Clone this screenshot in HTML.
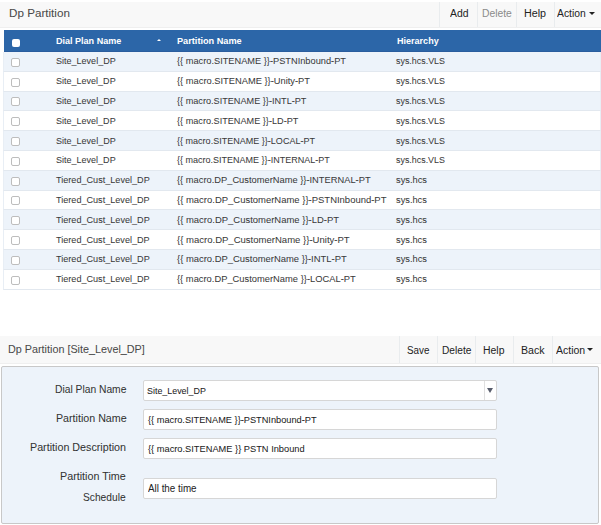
<!DOCTYPE html>
<html><head><meta charset="utf-8">
<style>
*{box-sizing:border-box;margin:0;padding:0}
html,body{width:601px;height:525px;overflow:hidden;background:#fff}
body{font-family:"Liberation Sans",sans-serif;position:relative;color:#333}
div{position:absolute;white-space:nowrap}
.t{line-height:normal;transform-origin:0 0;-webkit-text-stroke:0.04px currentColor}
.b{-webkit-text-stroke:0}
.bar{left:0;width:601px;background:#f8f8f8;border-bottom:1px solid #efefef}
.sep{width:1px;background:#e9ecee}
.thead{left:4px;top:30px;width:597px;height:21.5px;background:#2c66a8;border-bottom:1px solid #2a5d9e}
.row{left:3px;width:598px;height:19.8px;border-bottom:1px solid #e2e8ef;border-left:1px solid #e8eef5;border-right:1px solid #e8eef5}
.row.odd{background:#edf3fa}
.cb{left:11px;width:9px;height:9px;border:1px solid #bdbdbd;border-radius:2px;background:#fff}
.panel{left:1px;top:366px;width:598px;height:158px;background:#edf3fa;border:1px solid #c8c8c8;border-radius:2px}
.inp{left:143px;width:354px;height:20.5px;background:#fff;border:1px solid #d6d6d6;border-radius:2px}
.caret{width:0;height:0;border-left:3px solid transparent;border-right:3px solid transparent}

</style></head><body>
<div class="bar" style="top:2px;height:26px"></div>
<div class="sep" style="left:439px;top:2px;height:25px"></div>
<div class="sep" style="left:477px;top:2px;height:25px"></div>
<div class="sep" style="left:516px;top:2px;height:25px"></div>
<div class="sep" style="left:554px;top:2px;height:25px"></div>
<div class="caret" style="left:589px;top:12px;border-top:3px solid #222"></div>
<div class="thead"></div>
<div class="cb" style="left:12px;top:39px;width:8px;height:8px;border:none;background:#fff"></div>
<div class="caret" style="left:156.5px;top:38.8px;border-left-width:2.5px;border-right-width:2.5px;border-bottom:2.5px solid #fff"></div>
<div class="row odd" style="top:52.00px"></div><div class="cb" style="top:57.80px"></div>
<div class="row" style="top:71.80px"></div><div class="cb" style="top:77.60px"></div>
<div class="row odd" style="top:91.60px"></div><div class="cb" style="top:97.40px"></div>
<div class="row" style="top:111.40px"></div><div class="cb" style="top:117.20px"></div>
<div class="row odd" style="top:131.20px"></div><div class="cb" style="top:137.00px"></div>
<div class="row" style="top:151.00px"></div><div class="cb" style="top:156.80px"></div>
<div class="row odd" style="top:170.80px"></div><div class="cb" style="top:176.60px"></div>
<div class="row" style="top:190.60px"></div><div class="cb" style="top:196.40px"></div>
<div class="row odd" style="top:210.40px"></div><div class="cb" style="top:216.20px"></div>
<div class="row" style="top:230.20px"></div><div class="cb" style="top:236.00px"></div>
<div class="row odd" style="top:250.00px"></div><div class="cb" style="top:255.80px"></div>
<div class="row" style="top:269.80px"></div><div class="cb" style="top:275.60px"></div>
<div class="bar" style="top:336px;height:28px"></div>
<div class="sep" style="left:399px;top:336px;height:27px"></div>
<div class="sep" style="left:437px;top:336px;height:27px"></div>
<div class="sep" style="left:475px;top:336px;height:27px"></div>
<div class="sep" style="left:513px;top:336px;height:27px"></div>
<div class="sep" style="left:552px;top:336px;height:27px"></div>
<div class="caret" style="left:587px;top:348px;border-top:3px solid #222"></div>
<div class="panel"></div>
<div class="inp" style="top:380px"></div>
<div class="sep" style="left:484px;top:381px;height:18.5px;background:#e0e0e0"></div>
<div class="caret" style="left:487px;top:387.5px;border-left-width:3.5px;border-right-width:3.5px;border-top:5px solid #585d6c"></div>
<div class="inp" style="top:409px"></div>
<div class="inp" style="top:438px"></div>
<div class="inp" style="top:478px"></div>

<div class="t" style="left:9.48px;top:7.00px;font-size:10.5px;transform:scaleX(1.1103);color:#4a4a4a">Dp Partition</div>
<div class="t b" style="left:449.85px;top:8.00px;font-size:10px;transform:scaleX(1.0388);color:#222">Add</div>
<div class="t b" style="left:481.72px;top:8.00px;font-size:10px;transform:scaleX(1.0331);color:#8a8a8a">Delete</div>
<div class="t b" style="left:524.40px;top:8.00px;font-size:10px;transform:scaleX(1.0734);color:#222">Help</div>
<div class="t b" style="left:557.40px;top:8.00px;font-size:10px;transform:scaleX(1.0325);color:#222">Action</div>
<div class="t b" style="left:55.85px;top:35.20px;font-size:9.6px;transform:scaleX(0.9411);color:#fff;font-weight:bold">Dial Plan Name</div>
<div class="t b" style="left:177.13px;top:35.20px;font-size:9.6px;transform:scaleX(0.9556);color:#fff;font-weight:bold">Partition Name</div>
<div class="t b" style="left:396.69px;top:35.20px;font-size:9.6px;transform:scaleX(0.9419);color:#fff;font-weight:bold">Hierarchy</div>
<div class="t" style="left:55.63px;top:55.30px;font-size:9.6px;transform:scaleX(0.9407);color:#3a3a3a">Site_Level_DP</div>
<div class="t" style="left:176.73px;top:55.30px;font-size:9.6px;transform:scaleX(0.9630);color:#3a3a3a">{{ macro.SITENAME }}-PSTNInbound-PT</div>
<div class="t" style="left:396.39px;top:55.30px;font-size:9.6px;transform:scaleX(0.9272);color:#3a3a3a">sys.hcs.VLS</div>
<div class="t" style="left:55.64px;top:75.10px;font-size:9.6px;transform:scaleX(0.9398);color:#3a3a3a">Site_Level_DP</div>
<div class="t" style="left:176.78px;top:75.10px;font-size:9.6px;transform:scaleX(0.9707);color:#3a3a3a">{{ macro.SITENAME }}-Unity-PT</div>
<div class="t" style="left:396.39px;top:75.10px;font-size:9.6px;transform:scaleX(0.9269);color:#3a3a3a">sys.hcs.VLS</div>
<div class="t" style="left:55.63px;top:94.90px;font-size:9.6px;transform:scaleX(0.9407);color:#3a3a3a">Site_Level_DP</div>
<div class="t" style="left:176.74px;top:94.90px;font-size:9.6px;transform:scaleX(0.9521);color:#3a3a3a">{{ macro.SITENAME }}-INTL-PT</div>
<div class="t" style="left:396.39px;top:94.90px;font-size:9.6px;transform:scaleX(0.9272);color:#3a3a3a">sys.hcs.VLS</div>
<div class="t" style="left:55.64px;top:114.70px;font-size:9.6px;transform:scaleX(0.9398);color:#3a3a3a">Site_Level_DP</div>
<div class="t" style="left:176.76px;top:114.70px;font-size:9.6px;transform:scaleX(0.9524);color:#3a3a3a">{{ macro.SITENAME }}-LD-PT</div>
<div class="t" style="left:396.39px;top:114.70px;font-size:9.6px;transform:scaleX(0.9269);color:#3a3a3a">sys.hcs.VLS</div>
<div class="t" style="left:55.63px;top:134.50px;font-size:9.6px;transform:scaleX(0.9407);color:#3a3a3a">Site_Level_DP</div>
<div class="t" style="left:176.73px;top:134.50px;font-size:9.6px;transform:scaleX(0.9412);color:#3a3a3a">{{ macro.SITENAME }}-LOCAL-PT</div>
<div class="t" style="left:396.39px;top:134.50px;font-size:9.6px;transform:scaleX(0.9272);color:#3a3a3a">sys.hcs.VLS</div>
<div class="t" style="left:55.64px;top:154.30px;font-size:9.6px;transform:scaleX(0.9398);color:#3a3a3a">Site_Level_DP</div>
<div class="t" style="left:176.76px;top:154.30px;font-size:9.6px;transform:scaleX(0.9391);color:#3a3a3a">{{ macro.SITENAME }}-INTERNAL-PT</div>
<div class="t" style="left:396.39px;top:154.30px;font-size:9.6px;transform:scaleX(0.9269);color:#3a3a3a">sys.hcs.VLS</div>
<div class="t" style="left:55.90px;top:174.10px;font-size:9.6px;transform:scaleX(0.9487);color:#3a3a3a">Tiered_Cust_Level_DP</div>
<div class="t" style="left:176.75px;top:174.10px;font-size:9.6px;transform:scaleX(0.9708);color:#3a3a3a">{{ macro.DP_CustomerName }}-INTERNAL-PT</div>
<div class="t" style="left:396.34px;top:174.10px;font-size:9.6px;transform:scaleX(0.9658);color:#3a3a3a">sys.hcs</div>
<div class="t" style="left:55.93px;top:193.90px;font-size:9.6px;transform:scaleX(0.9479);color:#3a3a3a">Tiered_Cust_Level_DP</div>
<div class="t" style="left:176.77px;top:193.90px;font-size:9.6px;transform:scaleX(0.9869);color:#3a3a3a">{{ macro.DP_CustomerName }}-PSTNInbound-PT</div>
<div class="t" style="left:396.34px;top:193.90px;font-size:9.6px;transform:scaleX(0.9645);color:#3a3a3a">sys.hcs</div>
<div class="t" style="left:55.90px;top:213.70px;font-size:9.6px;transform:scaleX(0.9487);color:#3a3a3a">Tiered_Cust_Level_DP</div>
<div class="t" style="left:176.75px;top:213.70px;font-size:9.6px;transform:scaleX(0.9868);color:#3a3a3a">{{ macro.DP_CustomerName }}-LD-PT</div>
<div class="t" style="left:396.34px;top:213.70px;font-size:9.6px;transform:scaleX(0.9658);color:#3a3a3a">sys.hcs</div>
<div class="t" style="left:55.93px;top:233.50px;font-size:9.6px;transform:scaleX(0.9479);color:#3a3a3a">Tiered_Cust_Level_DP</div>
<div class="t" style="left:176.77px;top:233.50px;font-size:9.6px;transform:scaleX(0.9933);color:#3a3a3a">{{ macro.DP_CustomerName }}-Unity-PT</div>
<div class="t" style="left:396.34px;top:233.50px;font-size:9.6px;transform:scaleX(0.9645);color:#3a3a3a">sys.hcs</div>
<div class="t" style="left:55.90px;top:253.30px;font-size:9.6px;transform:scaleX(0.9487);color:#3a3a3a">Tiered_Cust_Level_DP</div>
<div class="t" style="left:176.77px;top:253.30px;font-size:9.6px;transform:scaleX(0.9823);color:#3a3a3a">{{ macro.DP_CustomerName }}-INTL-PT</div>
<div class="t" style="left:396.34px;top:253.30px;font-size:9.6px;transform:scaleX(0.9658);color:#3a3a3a">sys.hcs</div>
<div class="t" style="left:55.93px;top:273.10px;font-size:9.6px;transform:scaleX(0.9479);color:#3a3a3a">Tiered_Cust_Level_DP</div>
<div class="t" style="left:176.76px;top:273.10px;font-size:9.6px;transform:scaleX(0.9744);color:#3a3a3a">{{ macro.DP_CustomerName }}-LOCAL-PT</div>
<div class="t" style="left:396.34px;top:273.10px;font-size:9.6px;transform:scaleX(0.9645);color:#3a3a3a">sys.hcs</div>
<div class="t" style="left:7.63px;top:343.00px;font-size:10.5px;transform:scaleX(1.0278);color:#4a4a4a">Dp Partition [Site_Level_DP]</div>
<div class="t b" style="left:406.79px;top:344.60px;font-size:10px;transform:scaleX(0.9838);color:#222">Save</div>
<div class="t b" style="left:441.76px;top:344.60px;font-size:10px;transform:scaleX(1.0155);color:#222">Delete</div>
<div class="t b" style="left:483.36px;top:344.60px;font-size:10px;transform:scaleX(1.0440);color:#222">Help</div>
<div class="t b" style="left:520.88px;top:344.60px;font-size:10px;transform:scaleX(1.0602);color:#222">Back</div>
<div class="t b" style="left:555.50px;top:344.60px;font-size:10px;transform:scaleX(1.0505);color:#222">Action</div>
<div class="t" style="left:54.92px;top:382.80px;font-size:10.8px;transform:scaleX(0.9517);color:#333">Dial Plan Name</div>
<div class="t" style="left:55.59px;top:412.00px;font-size:10.8px;transform:scaleX(0.9889);color:#333">Partition Name</div>
<div class="t" style="left:30.41px;top:441.00px;font-size:10.8px;transform:scaleX(0.9933);color:#333">Partition Description</div>
<div class="t" style="left:60.41px;top:470.00px;font-size:10.8px;transform:scaleX(0.9954);color:#333">Partition Time</div>
<div class="t" style="left:83.48px;top:491.00px;font-size:10.8px;transform:scaleX(0.9459);color:#333">Schedule</div>
<div class="t" style="left:147.30px;top:385.00px;font-size:9.6px;transform:scaleX(0.9273);color:#222">Site_Level_DP</div>
<div class="t" style="left:147.67px;top:414.00px;font-size:9.6px;transform:scaleX(0.9607);color:#222">{{ macro.SITENAME }}-PSTNInbound-PT</div>
<div class="t" style="left:147.70px;top:443.00px;font-size:9.6px;transform:scaleX(0.9663);color:#222">{{ macro.SITENAME }} PSTN Inbound</div>
<div class="t b" style="left:147.91px;top:483.00px;font-size:10px;transform:scaleX(0.9823);color:#222">All the time</div>
</body></html>
